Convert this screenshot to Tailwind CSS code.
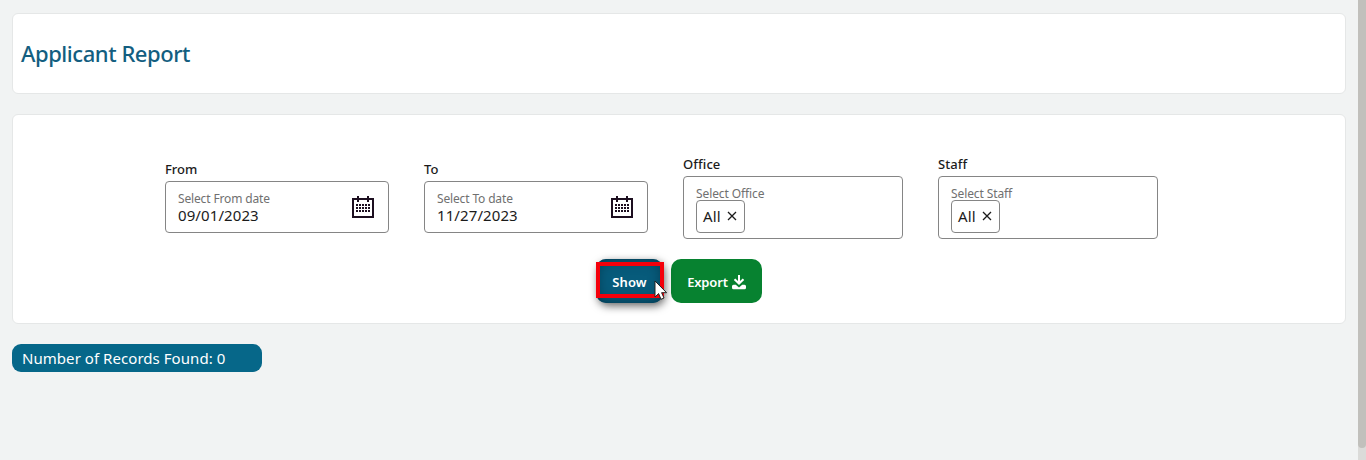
<!DOCTYPE html>
<html lang="en">
<head>
<meta charset="utf-8">
<title>Applicant Report</title>
<script src="https://cdn.jsdelivr.net/npm/@tailwindcss/browser@4"></script>
</head>
<body class="flex h-[460px] w-[1366px] overflow-hidden bg-[#f1f3f3] font-['Segoe_UI','Noto_Sans',sans-serif] text-[#1b1b1b]">
<svg class="hidden">
  <symbol id="calendar" viewBox="0 0 22 22">
    <path fill="#1d0f20" fill-rule="evenodd" d="M0 2h5V0h2v2h8V0h2v2h5v20H0zM2 4v16h18V4h-3v2h-2V4H7v2H5V4z"/>
    <path stroke="#1d0f20" stroke-width="2" stroke-dasharray="2 1" d="M4 9h14M4 12h14M4 15h14"/>
  </symbol>
  <symbol id="close" viewBox="0 0 10 10"><path d="M1 1l8 8M9 1L1 9" fill="none" stroke="#1b1b1b" stroke-width="1.3"/></symbol>
</svg>
<main class="w-[1358px] pt-[13px] pl-3">
  <header class="flex h-[81px] w-[1334px] items-center rounded-md border border-[#e5e7e7] bg-white pb-0.5 pl-2">
    <h1 class="text-[22px] leading-[30px] font-medium tracking-[-0.45px] text-[#135e80]">Applicant Report</h1>
  </header>
  <section class="mt-5 flex h-[210px] w-[1334px] flex-col items-center rounded-md border border-[#e5e7e7] bg-white pt-10">
    <div class="mr-[35px] flex h-[84px] items-center gap-[35px]">
      <div class="mb-[2px] w-[224px]">
        <label class="block h-[21px] text-[13px] leading-[18px] font-medium">From</label>
        <div class="flex h-[52px] items-center justify-between rounded border border-[#858585] pr-[14px] pl-3">
          <div class="pt-px">
            <div class="text-[12px] leading-4 tracking-[-0.15px] text-[#707070]">Select From date</div>
            <div class="text-[15px] leading-[17px] tracking-[0.1px]">09/01/2023</div>
          </div>
          <svg class="size-[22px]"><use href="#calendar"/></svg>
        </div>
      </div>
      <div class="mb-[2px] w-[224px]">
        <label class="block h-[21px] text-[13px] leading-[18px] font-medium">To</label>
        <div class="flex h-[52px] items-center justify-between rounded border border-[#858585] pr-[14px] pl-3">
          <div class="pt-px">
            <div class="text-[12px] leading-4 tracking-[-0.15px] text-[#707070]">Select To date</div>
            <div class="text-[15px] leading-[17px] tracking-[0.1px]">11/27/2023</div>
          </div>
          <svg class="size-[22px]"><use href="#calendar"/></svg>
        </div>
      </div>
      <div class="w-[220px]">
        <label class="block h-[21px] text-[13px] leading-[18px] font-medium tracking-[0.1px]">Office</label>
        <div class="h-[63px] rounded border border-[#858585] pt-[9px] pl-3">
          <div class="h-[14px] text-[12px] leading-4 tracking-[-0.1px] text-[#707070]">Select Office</div>
          <div class="flex h-[33px] w-[49px] items-center gap-1.5 rounded border border-[#858585] pl-1.5 text-[15px] tracking-[0.2px]"><span class="-mt-px">All</span><svg class="-mt-px size-[10px]"><use href="#close"/></svg></div>
        </div>
      </div>
      <div class="w-[220px]">
        <label class="block h-[21px] text-[13px] leading-[18px] font-medium tracking-[0.1px]">Staff</label>
        <div class="h-[63px] rounded border border-[#858585] pt-[9px] pl-3">
          <div class="h-[14px] text-[12px] leading-4 tracking-[-0.1px] text-[#707070]">Select Staff</div>
          <div class="flex h-[33px] w-[49px] items-center gap-1.5 rounded border border-[#858585] pl-1.5 text-[15px] tracking-[0.2px]"><span class="-mt-px">All</span><svg class="-mt-px size-[10px]"><use href="#close"/></svg></div>
        </div>
      </div>
    </div>
    <div class="mt-5 flex gap-2 text-[13px] font-semibold text-white">
      <button class="relative h-[44px] w-[67px] rounded-[10px] bg-[#075b7b] pt-[3px] tracking-[0.1px] shadow-[inset_0_0_14px_#033347,2px_3px_9px_rgba(0,0,0,0.6)]">Show
        <span class="absolute top-[3px] left-0 h-[36px] w-[68px] border-4 border-[#f4000b]"></span>
        <svg class="absolute top-[21px] left-[58px] h-[21px] w-[14px]" viewBox="0 0 14 21"><path d="M1 1v16l3.6-3.4L7 19.3l3-1.3-2.4-5.3h5z" fill="#fff" stroke="#222" stroke-width="1"/></svg>
      </button>
      <button class="flex h-[44px] w-[91px] items-center justify-center gap-1 rounded-[10px] bg-[#078230] pt-[3px] tracking-[-0.15px]">Export
        <svg class="h-[15px] w-[14px]" viewBox="0 0 14 15"><path d="M6 0h2v6l2.8-2.5 1.4 1.4L7 9.9 1.8 4.9l1.4-1.4L6 6z" fill="#fff"/><path d="M1.5 9.7h2.3L7 12.5l3.2-2.8h2.3a1.5 1.5 0 0 1 1.5 1.5v1.6a1.5 1.5 0 0 1-1.5 1.5h-11A1.5 1.5 0 0 1 0 12.8v-1.6a1.5 1.5 0 0 1 1.5-1.5z" fill="#fff"/></svg>
      </button>
    </div>
  </section>
  <div class="mt-5 flex h-7 w-[250px] items-center rounded-[9px] bg-[#066789] pl-[10px] text-[15px] tracking-[0.05px] text-white">Number of Records Found: 0</div>
</main>
<div class="h-[460px] w-2 bg-[#dbdbd9]"><div class="h-[448px] rounded-b bg-[#c1c0bc]"></div></div>
</body>
</html>
